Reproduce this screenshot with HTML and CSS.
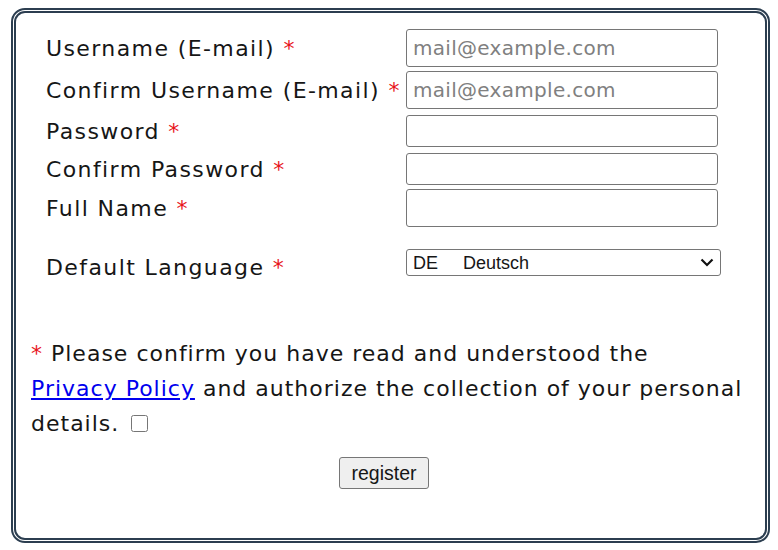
FILE: index.html
```html
<html>
	<head>
		<meta charset="utf-8" />
		<title>Register</title>
		<link rel="stylesheet" href="styles.css">
	</head>
	<body>
		<div class="box">
			<form name="registerForm">
				<div class="fields">
					<div class="row row-tall">
						<label for="user">Username (E-mail) <span class="req">*</span></label>
						<input type="text" id="user" class="tall" placeholder="mail@example.com">
					</div>
					<div class="row row-tall">
						<label for="user2">Confirm Username (E-mail) <span class="req">*</span></label>
						<input type="text" id="user2" class="tall" placeholder="mail@example.com">
					</div>
					<div class="row row-pw">
						<label for="pw">Password <span class="req">*</span></label>
						<input type="password" id="pw" class="short">
					</div>
					<div class="row row-pw2">
						<label for="pw2">Confirm Password <span class="req">*</span></label>
						<input type="password" id="pw2" class="short">
					</div>
					<div class="row row-name">
						<label for="fullname">Full Name <span class="req">*</span></label>
						<input type="text" id="fullname" class="tall">
					</div>
					<div class="row row-lang">
						<label for="lang">Default Language <span class="req">*</span></label>
						<select id="lang">
							<option>DE&nbsp;&nbsp;&nbsp;&nbsp;&nbsp;Deutsch</option>
							<option>EN&nbsp;&nbsp;&nbsp;&nbsp;&nbsp;English</option>
						</select>
					</div>
				</div>
				<p class="privacy"><span class="req">*</span> Please confirm you have read and understood the <a href="#">Privacy Policy</a> and authorize the collection of your personal details. <input type="checkbox" class="agree"></p>
				<div class="actions">
					<button type="button">register</button>
				</div>
			</form>
		</div>
	</body>
</html>
```

FILE: styles.css
```css
body { margin: 8px 8px 0 11px; background-color: #ffffff; font-family: "DejaVu Sans", sans-serif; font-size: 22px; letter-spacing: 1px; color: #161616; }
.box { height: 525px; width: 719px; border: 5px double #2c3e50; border-radius: 14px; padding: 0 15px; }
.req { color: #e8141b; }
a { color: #0000ee; white-space: nowrap; }

.fields { padding-top: 16px; padding-left: 15px; letter-spacing: 1.4px; }
.row { display: grid; grid-template-columns: 360px 312px; align-items: center; }
.row-tall + .row-tall { margin-top: 4px; }
.row-pw { margin-top: 6px; }
.row-pw2 { margin-top: 6px; }
.row-name { margin-top: 4px; }
.row-lang { margin-top: 22px; grid-template-columns: 360px 315px; }
.row-lang label { position: relative; top: 5px; }

input { font-family: "DejaVu Sans", sans-serif; font-size: 20px; letter-spacing: 0.3px; border: 1px solid #767676; border-radius: 3px; padding: 0 6px; box-sizing: border-box; width: 312px; color: #161616; }
input::placeholder { color: #808080; }
input.tall { height: 38px; }
input.short { height: 32px; }

select { appearance: none; font-family: Arial, "Liberation Sans", sans-serif; font-size: 18px; letter-spacing: 0; height: 27px; border: 1px solid #767676; border-radius: 3px; padding: 0 24px 0 6px; color: #161616; background: #ffffff url("data:image/svg+xml,%3Csvg xmlns='http://www.w3.org/2000/svg' width='14' height='9' viewBox='0 0 14 9'%3E%3Cpath d='M1.5 1.5 7 7l5.5-5.5' fill='none' stroke='%23111' stroke-width='2.2'/%3E%3C/svg%3E") no-repeat right 6px center; }

.privacy { margin: 60px 0 0 0; line-height: 35px; }
.agree { width: 17px; height: 17px; margin: 0 0 0 4px; vertical-align: -1px; }
.actions { text-align: center; margin-top: 16px; padding-right: 13px; }
button { font-family: Arial, "Liberation Sans", sans-serif; font-size: 19.5px; letter-spacing: 0; background-color: #efefef; border: 1px solid #767676; border-radius: 3px; padding: 3px 11px; color: #161616; height: 32px; }
```
